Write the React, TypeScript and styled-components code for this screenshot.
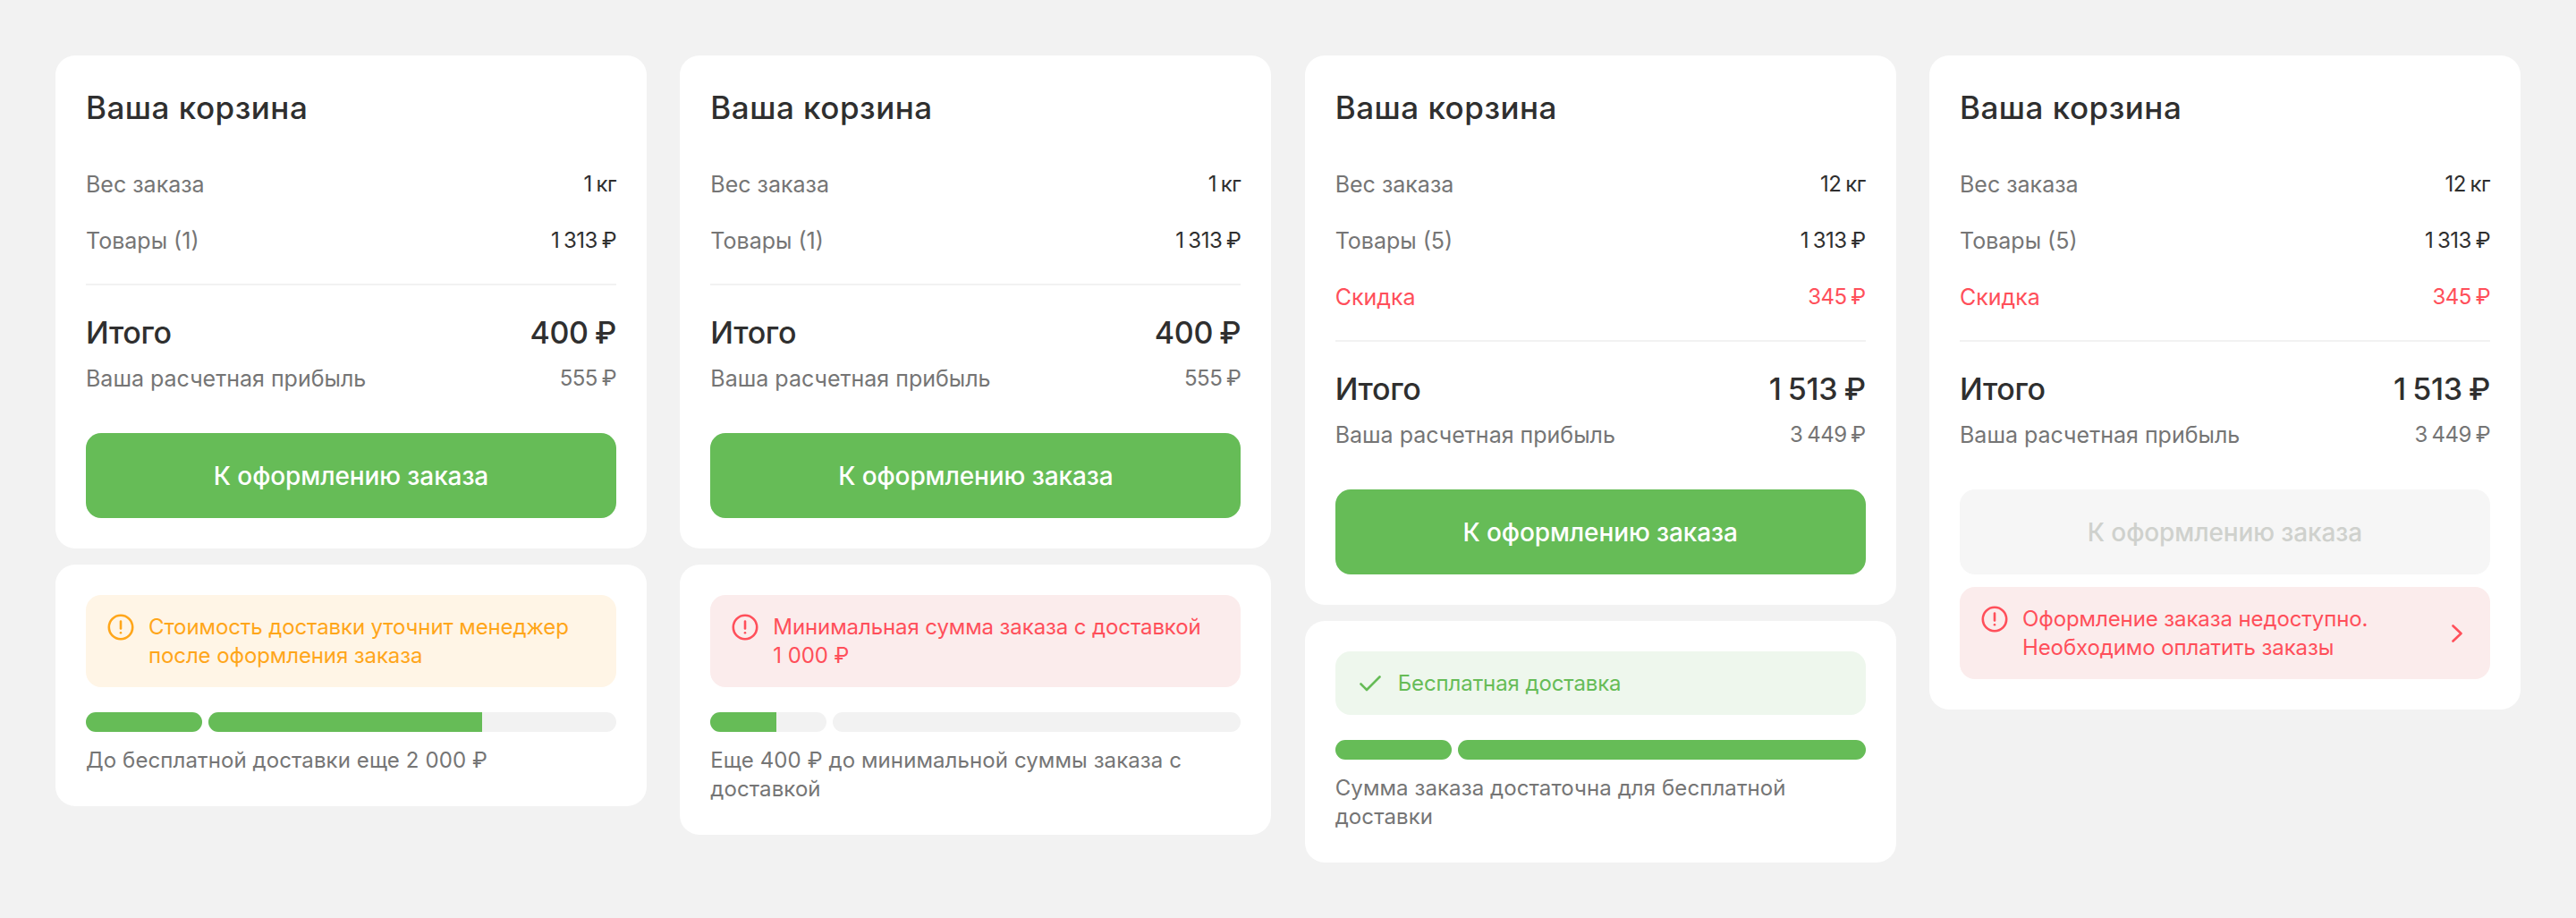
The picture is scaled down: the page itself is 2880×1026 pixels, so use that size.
import React from "react";
import styled, { createGlobalStyle } from "styled-components";

const Global = createGlobalStyle`
  html, body { margin: 0; padding: 0; background: #f2f2f2; }
  body { font-family: Inter, "Noto Sans", sans-serif; }
`;

const Page = styled.div`
  display: grid;
  grid-template-columns: repeat(4, 1fr);
  column-gap: 37.33px;
  align-items: start;
  padding: 62px;
  box-sizing: border-box;
  min-height: 1026px;
  background: #f2f2f2;
`;
const Column = styled.div`
  display: flex;
  flex-direction: column;
  gap: 18px;
`;
const Card = styled.section`
  background: #fff;
  border-radius: 22px;
  padding: 34px;
`;
const Title = styled.h2`
  margin: 0 0 46px;
  font-size: 35px;
  line-height: 48px;
  font-weight: 500;
  letter-spacing: 0.5px;
  color: #2f2f2f;
`;
const Rows = styled.div`
  display: flex;
  flex-direction: column;
  gap: 31px;
`;
const Row = styled.div<{ $tone?: "danger" }>`
  display: flex;
  justify-content: space-between;
  align-items: center;
  font-size: 25px;
  line-height: 32px;
  color: ${(p) => (p.$tone === "danger" ? "#ff4f5a" : "#757575")};
`;
const Value = styled.span<{ $tone?: "danger" | "muted" }>`
  font-size: 24px;
  letter-spacing: -0.5px;
  word-spacing: -1.5px;
  color: ${(p) => (p.$tone === "danger" ? "#ff4f5a" : p.$tone === "muted" ? "#757575" : "#2f2f2f")};
`;
const Divider = styled.hr`
  border: 0;
  height: 2px;
  margin: 32px 0;
  background: #f2f2f2;
`;
const Total = styled.div`
  display: flex;
  justify-content: space-between;
  font-size: 34px;
  line-height: 42px;
  font-weight: 500;
  letter-spacing: -0.3px;
  word-spacing: -1.5px;
  color: #2f2f2f;
  margin-bottom: 14px;
`;
const CheckoutButton = styled.button<{ $disabled?: boolean }>`
  display: block;
  width: 100%;
  height: 95px;
  margin-top: 45px;
  border: 0;
  border-radius: 17px;
  font-family: inherit;
  font-size: 28px;
  font-weight: 500;
  letter-spacing: -0.1px;
  background: ${(p) => (p.$disabled ? "#f6f6f6" : "#66bc57")};
  color: ${(p) => (p.$disabled ? "#cfd1cd" : "#fff")};
`;
type Tone = "warning" | "danger" | "success";
const toneBg: Record<Tone, string> = { warning: "#fff5e6", danger: "#fbecec", success: "#eef7ed" };
const toneFg: Record<Tone, string> = { warning: "#ffa61a", danger: "#ff4f5a", success: "#66bc57" };
const Alert = styled.div<{ $tone: Tone; $attached?: boolean }>`
  display: flex;
  align-items: flex-start;
  gap: 16px;
  padding: 19.5px 24px;
  margin-top: ${(p) => (p.$attached ? "14px" : "0")};
  border-radius: 17px;
  font-size: 24px;
  line-height: 32px;
  letter-spacing: -0.1px;
  background: ${(p) => toneBg[p.$tone]};
  color: ${(p) => toneFg[p.$tone]};
`;
const AlertText = styled.div`
  flex: 1;
`;
const IconBox = styled.span`
  flex: none;
  display: flex;
  width: 30px;
  height: 32px;
  align-items: center;
  justify-content: center;
`;
const ChevronBox = styled.span`
  flex: none;
  align-self: center;
  display: flex;
  margin-right: 6px;
`;
const Progress = styled.div`
  display: flex;
  gap: 7px;
  margin-top: 28px;
`;
const Track = styled.div<{ $grow: number }>`
  flex: ${(p) => p.$grow} 1 0;
  height: 22px;
  border-radius: 11px;
  overflow: hidden;
  background: #f2f2f2;
`;
const Fill = styled.div`
  height: 100%;
  background: #66bc57;
`;
const Note = styled.p`
  margin: 16px 0 1px;
  font-size: 24px;
  line-height: 32px;
  letter-spacing: 0.1px;
  color: #757575;
`;

const WarnIcon = () => (
  <svg width="30" height="30" viewBox="0 0 30 30" fill="none" stroke="currentColor" strokeWidth="2.6" strokeLinecap="round">
    <circle cx="15" cy="15" r="13.2" />
    <path d="M15 8.5v8" />
    <path d="M15 21.2v.1" />
  </svg>
);
const CheckIcon = () => (
  <svg width="30" height="30" viewBox="0 0 30 30" fill="none" stroke="currentColor" strokeWidth="2.6" strokeLinecap="round" strokeLinejoin="round">
    <path d="M4.5 15.5l6.5 6.5L25.5 7.5" />
  </svg>
);
const Chevron = () => (
  <svg width="14" height="20" viewBox="0 0 14 20" fill="none" stroke="currentColor" strokeWidth="2.6" strokeLinecap="round" strokeLinejoin="round">
    <path d="M2.5 1.5L11.5 10L2.5 18.5" />
  </svg>
);

interface Data {
  weight: string;
  count: number;
  discount?: string;
  total: string;
  profit: string;
  disabled?: boolean;
  attached?: { text: React.ReactNode };
  alert?: { tone: Tone; text: React.ReactNode };
  bars?: [number, number];
  note?: React.ReactNode;
}

const data: Data[] = [
  {
    weight: "1 кг", count: 1, total: "400 ₽", profit: "555 ₽",
    alert: { tone: "warning", text: <>Стоимость доставки уточнит менеджер<br />после оформления заказа</> },
    bars: [100, 67], note: "До бесплатной доставки еще 2 000 ₽",
  },
  {
    weight: "1 кг", count: 1, total: "400 ₽", profit: "555 ₽",
    alert: { tone: "danger", text: <>Минимальная сумма заказа с доставкой<br />1 000 ₽</> },
    bars: [57, 0], note: <>Еще 400 ₽ до минимальной суммы заказа с<br />доставкой</>,
  },
  {
    weight: "12 кг", count: 5, discount: "345 ₽", total: "1 513 ₽", profit: "3 449 ₽",
    alert: { tone: "success", text: "Бесплатная доставка" },
    bars: [100, 100], note: <>Сумма заказа достаточна для бесплатной<br />доставки</>,
  },
  {
    weight: "12 кг", count: 5, discount: "345 ₽", total: "1 513 ₽", profit: "3 449 ₽",
    disabled: true,
    attached: { text: <>Оформление заказа недоступно.<br />Необходимо оплатить заказы</> },
  },
];

const Basket = ({ d }: { d: Data }) => (
  <Column>
    <Card>
      <Title>Ваша корзина</Title>
      <Rows>
        <Row>Вес заказа<Value>{d.weight}</Value></Row>
        <Row>Товары ({d.count})<Value>1 313 ₽</Value></Row>
        {d.discount && <Row $tone="danger">Скидка<Value $tone="danger">{d.discount}</Value></Row>}
      </Rows>
      <Divider />
      <Total>Итого<span>{d.total}</span></Total>
      <Row>Ваша расчетная прибыль<Value $tone="muted">{d.profit}</Value></Row>
      <CheckoutButton $disabled={d.disabled}>К оформлению заказа</CheckoutButton>
      {d.attached && (
        <Alert $tone="danger" $attached>
          <IconBox><WarnIcon /></IconBox>
          <AlertText>{d.attached.text}</AlertText>
          <ChevronBox><Chevron /></ChevronBox>
        </Alert>
      )}
    </Card>
    {d.alert && (
      <Card>
        <Alert $tone={d.alert.tone}>
          <IconBox>{d.alert.tone === "success" ? <CheckIcon /> : <WarnIcon />}</IconBox>
          <AlertText>{d.alert.text}</AlertText>
        </Alert>
        <Progress>
          <Track $grow={130}><Fill style={{ width: `${d.bars![0]}%` }} /></Track>
          <Track $grow={456}><Fill style={{ width: `${d.bars![1]}%` }} /></Track>
        </Progress>
        <Note>{d.note}</Note>
      </Card>
    )}
  </Column>
);

export default function App() {
  return (
    <>
      <Global />
      <Page>
        {data.map((d, i) => <Basket key={i} d={d} />)}
      </Page>
    </>
  );
}
